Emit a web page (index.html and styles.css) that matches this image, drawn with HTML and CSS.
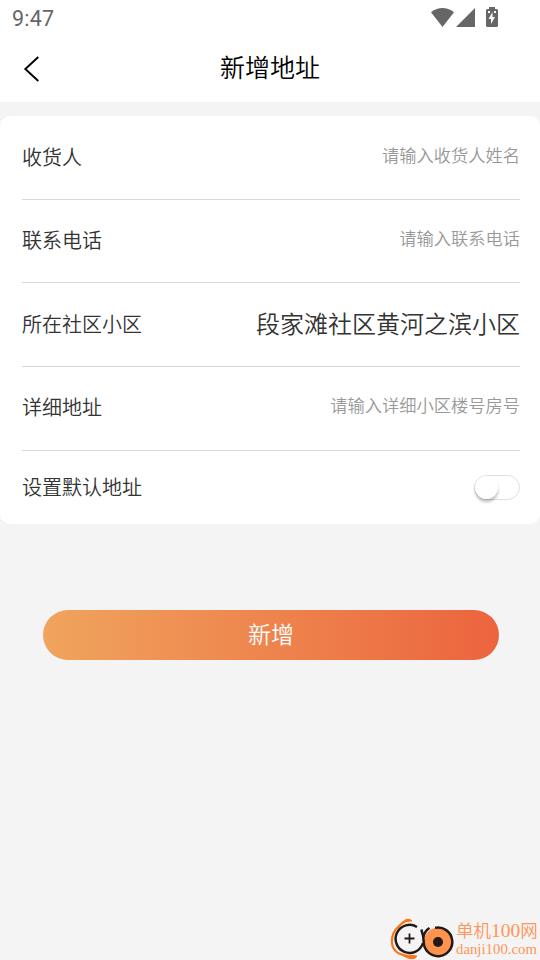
FILE: index.html
```html
<!DOCTYPE html>
<html lang="zh-CN">
<head>
<meta charset="utf-8">
<title>新增地址</title>
<link rel="stylesheet" href="styles.css">
</head>
<body>
<div class="screen">
  <div class="status">
    <span class="clock">9:47</span>
    <svg class="status-icons" width="70" height="24" viewBox="0 0 70 24" fill="#666">
      <path d="M1 12.200Q12.500 3.800 24 12.200L12.500 27z"/>
      <path d="M45 8v19H26z"/>
      <path fill-rule="evenodd" d="M59 7h6v2h1.500a1.500 1.500 0 0 1 1.500 1.500v15a1.500 1.500 0 0 1-1.500 1.500h-9a1.500 1.500 0 0 1-1.500-1.500v-15A1.500 1.500 0 0 1 57.500 9H59zM62.500 12l-4 7h2.500v5l4-7h-2.500zM58 11v2h2v-2zM64 11v2h2v-2z"/>
    </svg>
  </div>
  <header class="header">
    <svg class="back" width="20" height="28" viewBox="0 0 20 28" fill="none" stroke="#000" stroke-width="1.900"><path d="M16.300 2L3.300 14l13 12"/></svg>
    <h1 class="title">新增地址</h1>
  </header>
  <main class="card">
    <div class="row"><span class="label">收货人</span><span class="hint">请输入收货人姓名</span></div>
    <div class="row row-phone"><span class="label">联系电话</span><span class="hint">请输入联系电话</span></div>
    <div class="row"><span class="label">所在社区小区</span><span class="value">段家滩社区黄河之滨小区</span></div>
    <div class="row row-detail"><span class="label">详细地址</span><span class="hint">请输入详细小区楼号房号</span></div>
    <div class="row row-default"><span class="label">设置默认地址</span><span class="switch"><span class="knob"></span></span></div>
  </main>
  <button class="submit">新增</button>
  <footer class="brand">
    <svg width="66" height="44" viewBox="0 0 66 44" fill="none">
      <path d="M20 3.500C14 3 13 6 9 9C-1 18 0 32 9 36.500C15 38 19 42 25 40.500" stroke="#ff7416" stroke-width="2.200"/>
      <path d="M11 7Q17-1 22 4Q17 3 11 7zM12 38Q20 38 27 39Q24 45 12 38z" fill="#ff7416" stroke="#ff7416"/>
      <circle cx="48" cy="25" r="14.300" fill="#ff924d"/>
      <path d="M27 10A14 14 0 1 0 33 26" stroke="#231a18" stroke-width="2.500"/>
      <path d="M45 10.900A14.300 14.300 0 1 1 33.700 25Q33.700 19 31.300 12.500M33.500 20Q34.500 14 39.500 11" stroke="#231a18" stroke-width="2.500"/>
      <circle cx="48" cy="25" r="5" fill="#231a18"/>
      <path d="M14.500 21.500h10M19.500 16.500v10" stroke="#231a18" stroke-width="1.800"/>
    </svg>
    <div class="brand-text"><span class="brand-name">单机<span class="brand-num">100</span>网</span><span class="brand-url">danji100.com</span></div>
  </footer>
</div>
</body>
</html>
```
FILE: styles.css
```css
* { box-sizing: border-box; }
body {
  margin: 0;
  background: #f4f4f4;
  color: #333;
  font-family: "Noto Sans CJK SC", sans-serif;
  font-weight: 350;
}
.screen { height: 960px; display: flex; flex-direction: column; overflow: hidden; }
.status {
  height: 36px;
  flex: none;
  display: flex;
  justify-content: space-between;
  padding: 0 40px 0 12px;
  background: #fff;
}
.clock { font: 400 21.500px/38px Roboto, sans-serif; color: #666; letter-spacing: .2px; }
.status-icons { overflow: visible; }
.header {
  height: 66px;
  flex: none;
  display: grid;
  grid-template-columns: 60px 1fr 60px;
  background: #fff;
}
.back { margin: 19px 0 0 22px; }
.title { margin: 0; text-align: center; color: #000; font-size: 25px; font-weight: 350; line-height: 60px; }
.card { flex: none; height: 408px; margin-top: 14px; padding: 0 20px 0 22px; background: #fff; border-radius: 10px; }
.row {
  height: 84px;
  display: flex;
  justify-content: space-between;
  align-items: center;
  border-bottom: 1px solid #d8d8d8;
}
.row-phone { height: 83px; }
.row-default { height: 73px; border: 0; }
.label { font-size: 20px; line-height: 30px; padding-bottom: 2px; }
.row-detail .label { padding-bottom: 3px; }
.hint { font-size: 17.250px; line-height: 26px; color: #999; padding-bottom: 6px; }
.row-detail .hint { padding-bottom: 8px; }
.value { font-size: 24px; line-height: 36px; padding-bottom: 4px; }
.switch { width: 46px; height: 25px; border: 1px solid #dfdfdf; border-radius: 13px; }
.knob { display: block; width: 23px; height: 23px; border-radius: 50%; background: #fff; box-shadow: 0 3px 3px rgba(0, 0, 0, .25); }
.submit {
  flex: none;
  width: 456px;
  height: 50px;
  margin: 86px 0 0 43px;
  padding: 0 0 4px;
  border: 0;
  border-radius: 25px;
  background: linear-gradient(90deg, #f0a45d, #ec643e);
  color: #fff;
  font: 350 23px/46px "Noto Sans CJK SC", sans-serif;
}
.brand { display: flex; margin: auto 2px 0 auto; height: 43px; width: 148px; }
.brand svg { flex: none; }
.brand-text { display: flex; flex-direction: column; color: #ff9559; white-space: nowrap; }
.brand-name { font-size: 17.500px; line-height: 25px; }
.brand-num { font: 19.500px/20px "Liberation Serif", serif; }
.brand-url { font: 14.800px/15px "Liberation Serif", serif; }
```
